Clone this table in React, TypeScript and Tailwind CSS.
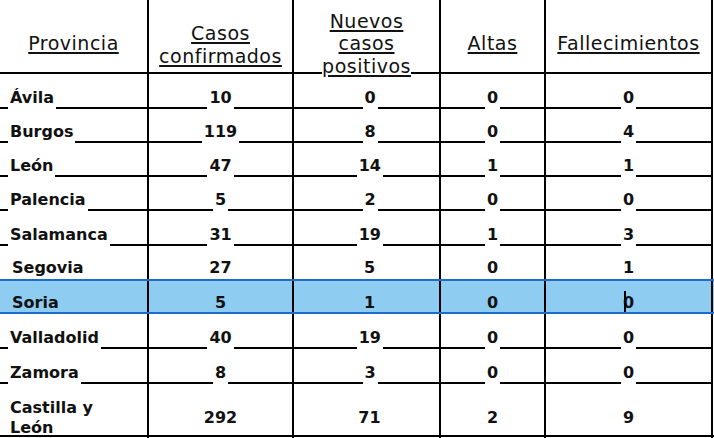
import React from "react";

type Kind = "line" | "plain" | "soria" | "total";

type Row = {
  name: string;
  casos: string;
  nuevos: string;
  altas: string;
  fall: string;
  h: string;
  kind: Kind;
};

const data: Row[] = [
  { name: "Ávila", casos: "10", nuevos: "0", altas: "0", fall: "0", h: "h-[35px]", kind: "line" },
  { name: "Burgos", casos: "119", nuevos: "8", altas: "0", fall: "4", h: "h-[34px]", kind: "line" },
  { name: "León", casos: "47", nuevos: "14", altas: "1", fall: "1", h: "h-[34px]", kind: "line" },
  { name: "Palencia", casos: "5", nuevos: "2", altas: "0", fall: "0", h: "h-[34px]", kind: "line" },
  { name: "Salamanca", casos: "31", nuevos: "19", altas: "1", fall: "3", h: "h-[35px]", kind: "line" },
  { name: "Segovia", casos: "27", nuevos: "5", altas: "0", fall: "1", h: "h-[33px]", kind: "plain" },
  { name: "Soria", casos: "5", nuevos: "1", altas: "0", fall: "0", h: "h-[35px]", kind: "soria" },
  { name: "Valladolid", casos: "40", nuevos: "19", altas: "0", fall: "0", h: "h-[35px]", kind: "line" },
  { name: "Zamora", casos: "8", nuevos: "3", altas: "0", fall: "0", h: "h-[35px]", kind: "line" },
  { name: "Castilla y León", casos: "292", nuevos: "71", altas: "2", fall: "9", h: "h-[53px]", kind: "total" },
];

const cols = "grid grid-cols-[149px_145px_147px_105px_167px]";
const cell = "flex min-w-0 border-r-2 border-black";
const ul = "underline decoration-[1.5px] underline-offset-[2px]";

function Seg({ fixed, wide }: { fixed?: boolean; wide?: boolean }) {
  if (fixed) return <div className="h-[2px] w-[8px] shrink-0 bg-black" />;
  return <div className={wide ? "h-[2px] flex-[1.12] bg-black" : "h-[2px] flex-1 bg-black"} />;
}

function Value({ value, kind, caret, shift }: { value: string; kind: Kind; caret?: boolean; shift?: boolean }) {
  const text = caret ? (
    <span className="relative inline-block">
      {value}
      <span className="absolute top-[-3px] left-[1px] h-[21px] w-[2px] bg-black" />
    </span>
  ) : (
    value
  );

  if (kind === "line") {
    return (
      <div className={`${cell} items-end`}>
        <Seg wide={shift} />
        <span className="px-[2px] pb-[2px] leading-[18px]">{text}</span>
        <Seg />
      </div>
    );
  }
  if (kind === "total") {
    return (
      <div className={`${cell} items-center justify-center pt-[14px] ${shift ? "pl-[6px]" : ""}`}>
        <span className="leading-[18px]">{text}</span>
      </div>
    );
  }
  return (
    <div className={`${cell} items-end justify-center ${kind === "plain" ? "pb-[2px]" : ""} ${shift ? "pl-[6px]" : ""}`}>
      <span className="leading-[18px]">{text}</span>
    </div>
  );
}

function NameCell({ row }: { row: Row }) {
  if (row.kind === "line") {
    return (
      <div className={`${cell} items-end`}>
        <Seg fixed />
        <span className="px-[2px] pb-[2px] leading-[18px] whitespace-nowrap">{row.name}</span>
        <Seg />
      </div>
    );
  }
  if (row.kind === "total") {
    return (
      <div className={`${cell} flex-col justify-center pt-[14px] pl-[10px] leading-[20px]`}>
        <div className="h-[20px]">Castilla y</div>
        <div className="h-[20px]">León</div>
      </div>
    );
  }
  return (
    <div className={`${cell} items-end pl-[12px] ${row.kind === "plain" ? "pb-[2px]" : ""}`}>
      <span className="leading-[18px]">{row.name}</span>
    </div>
  );
}

function BodyRow({ row }: { row: Row }) {
  const extra =
    row.kind === "soria"
      ? "border-y-2 border-[#1d6cc8] bg-[#8ecdf1]"
      : row.kind === "total"
        ? "border-b-2 border-black"
        : "";
  return (
    <div className={`${cols} ${row.h} ${extra}`}>
      <NameCell row={row} />
      <Value value={row.casos} kind={row.kind} />
      <Value value={row.nuevos} kind={row.kind} shift />
      <Value value={row.altas} kind={row.kind} />
      <Value value={row.fall} kind={row.kind} caret={row.kind === "soria"} />
    </div>
  );
}

export default function App() {
  return (
    <div className="h-[438px] w-[714px] overflow-hidden bg-white font-['DejaVu_Sans',sans-serif] text-[#111]">
      <div className={`${cols} h-[74px] text-[19px] leading-[22.5px] tracking-[0.5px]`}>
        <div className={`${cell} items-end justify-center border-b-2 pb-[18px]`}>
          <span className={ul}>Provincia</span>
        </div>
        <div className={`${cell} flex-col items-center justify-end border-b-2 pb-[5px] text-center`}>
          <div className={ul}>Casos</div>
          <div className={ul}>confirmados</div>
        </div>
        <div className={`${cell} items-end`}>
          <Seg />
          <div className="mb-[-3px] flex flex-col items-center">
            <div className={ul}>Nuevos</div>
            <div className={ul}>casos</div>
            <div className={ul}>positivos</div>
          </div>
          <Seg />
        </div>
        <div className={`${cell} items-end justify-center border-b-2 pb-[18px]`}>
          <span className={ul}>Altas</span>
        </div>
        <div className={`${cell} items-end justify-center border-b-2 pb-[18px]`}>
          <span className={ul}>Fallecimientos</span>
        </div>
      </div>
      <div className="text-[16px] font-bold">
        {data.map((row) => (
          <BodyRow key={row.name} row={row} />
        ))}
      </div>
    </div>
  );
}
